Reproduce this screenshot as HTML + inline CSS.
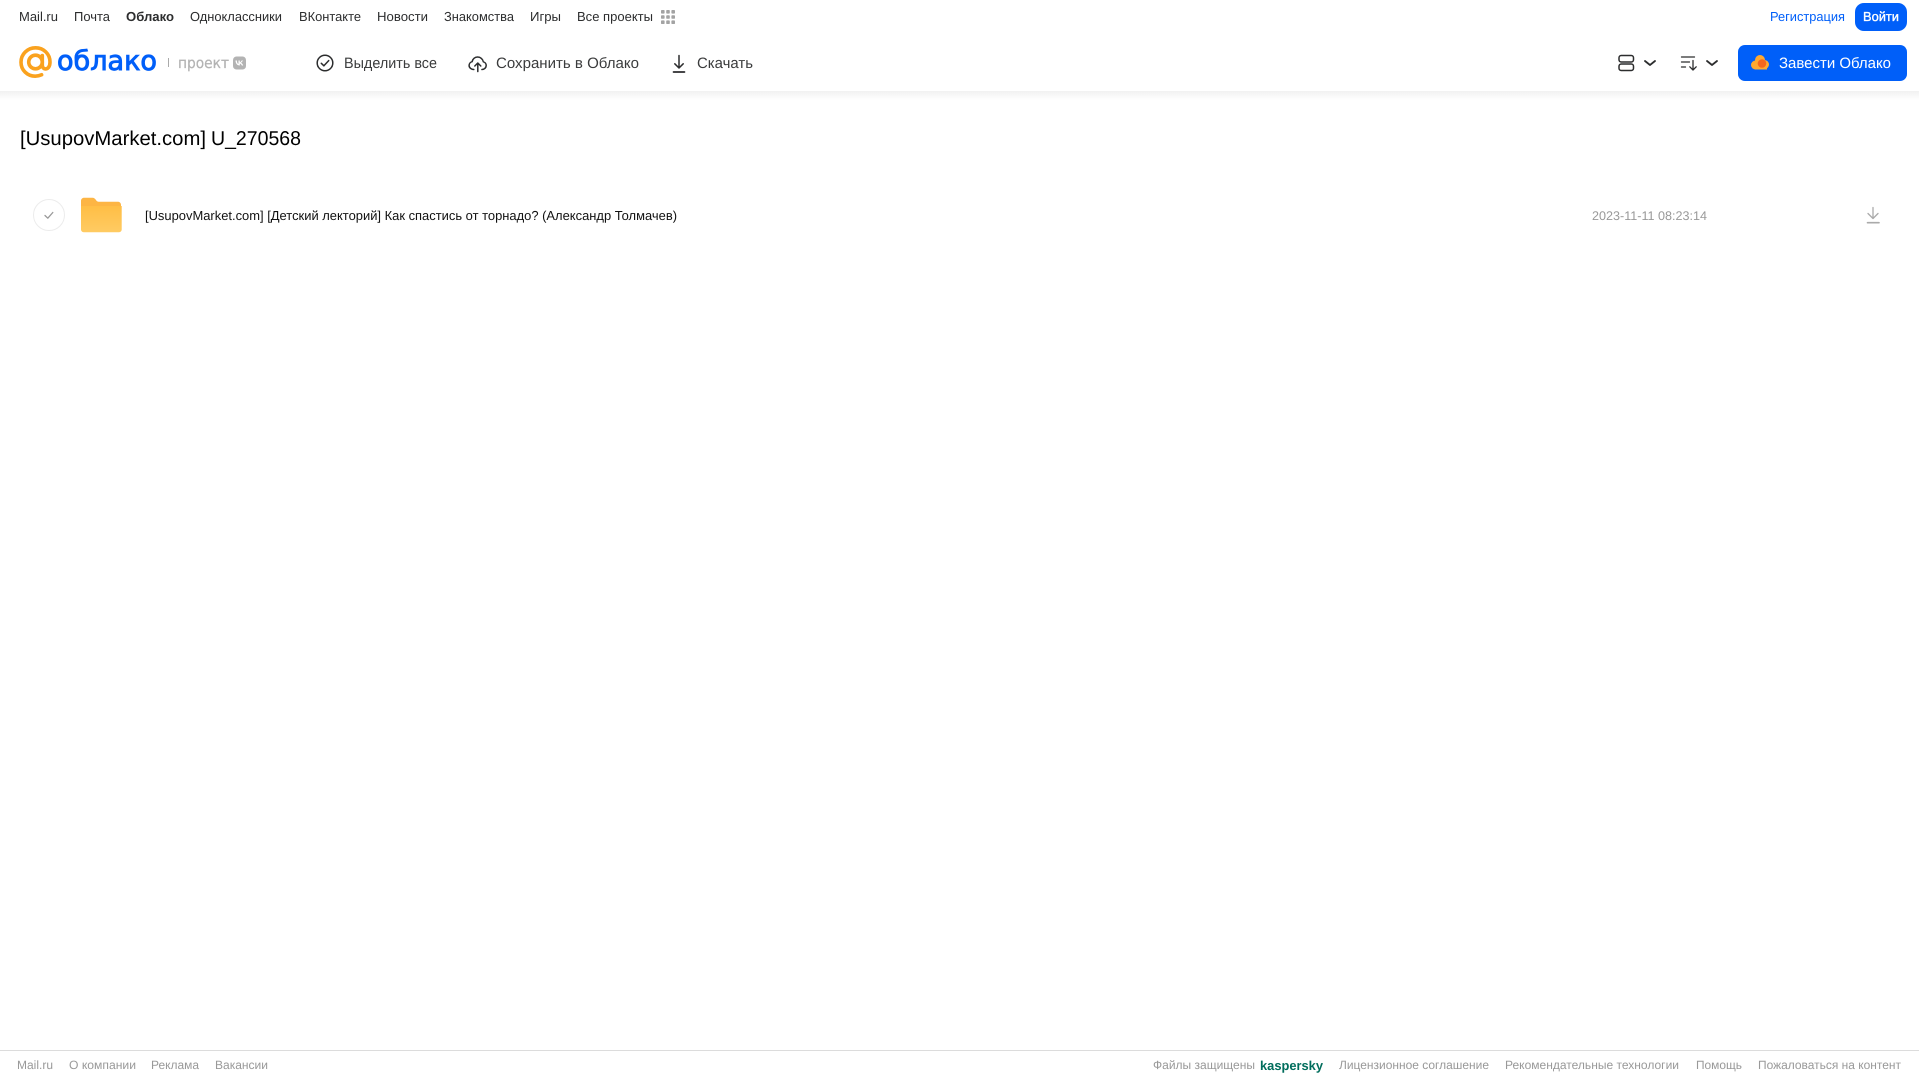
<!DOCTYPE html>
<html lang="ru"><head><meta charset="utf-8"><title>Облако</title>
<style>
html,body{margin:0;padding:0;background:#fff;width:1919px;height:1079px;overflow:hidden}
svg{position:absolute;left:0;top:0;display:block}
text{font-family:"Liberation Sans","DejaVu Sans",sans-serif;text-rendering:geometricPrecision}
.n{font-size:13px;fill:#2c2d2e}
.t{font-size:15px;fill:#3b3c3d}
.f{font-size:12px;fill:#999}
</style></head><body>
<svg width="1919" height="1079" viewBox="0 0 1919 1079" xmlns="http://www.w3.org/2000/svg">
<defs>
<linearGradient id="hs" x1="0" y1="0" x2="0" y2="1"><stop offset="0" stop-color="#f1f1f1"/><stop offset="1" stop-color="#fff"/></linearGradient>
<linearGradient id="fo" x1="0" y1="0" x2="0" y2="1"><stop offset="0" stop-color="#ffbe45"/><stop offset="1" stop-color="#ffcb63"/></linearGradient>
</defs>
<rect x="0" y="91" width="1919" height="9" fill="url(#hs)"/>

<!-- top nav -->
<text class="n" x="19" y="21" textLength="39" lengthAdjust="spacingAndGlyphs">Mail.ru</text>
<text class="n" x="74" y="21" textLength="36" lengthAdjust="spacingAndGlyphs">Почта</text>
<text class="n" x="126" y="21" textLength="48" lengthAdjust="spacingAndGlyphs" font-weight="700">Облако</text>
<text class="n" x="190" y="21" textLength="92" lengthAdjust="spacingAndGlyphs">Одноклассники</text>
<text class="n" x="299" y="21" textLength="62" lengthAdjust="spacingAndGlyphs">ВКонтакте</text>
<text class="n" x="377" y="21" textLength="51" lengthAdjust="spacingAndGlyphs">Новости</text>
<text class="n" x="444" y="21" textLength="70" lengthAdjust="spacingAndGlyphs">Знакомства</text>
<text class="n" x="530" y="21" textLength="31" lengthAdjust="spacingAndGlyphs">Игры</text>
<text class="n" x="577" y="21" textLength="76" lengthAdjust="spacingAndGlyphs">Все проекты</text>
<g fill="#a3a3a3">
<rect x="661" y="10" width="3.6" height="3.6" rx=".8"/><rect x="666.2" y="10" width="3.6" height="3.6" rx=".8"/><rect x="671.4" y="10" width="3.6" height="3.6" rx=".8"/>
<rect x="661" y="15.2" width="3.6" height="3.6" rx=".8"/><rect x="666.2" y="15.2" width="3.6" height="3.6" rx=".8"/><rect x="671.4" y="15.2" width="3.6" height="3.6" rx=".8"/>
<rect x="661" y="20.4" width="3.6" height="3.6" rx=".8"/><rect x="666.2" y="20.4" width="3.6" height="3.6" rx=".8"/><rect x="671.4" y="20.4" width="3.6" height="3.6" rx=".8"/>
</g>
<text x="1770" y="21" font-size="13" fill="#005ff9" textLength="75" lengthAdjust="spacingAndGlyphs">Регистрация</text>
<rect x="1855" y="3" width="52" height="28" rx="9" fill="#005ff9"/>
<text x="1863" y="21" font-size="13" fill="#fff" stroke="#fff" stroke-width=".35" textLength="36" lengthAdjust="spacingAndGlyphs">Войти</text>

<!-- logo -->
<g fill="none" stroke="#faa21e" stroke-width="3.6" stroke-linecap="round">
<circle cx="35.500" cy="62" r="6.800"/>
<path d="M42.300 55.500V65c0 2.500 1.500 3.900 3.400 3.900 2.500 0 4.300-2.700 4.300-6.900 0-8.100-6.400-14.200-14.400-14.200S21 54 21 62.200c0 8 6.400 14 14.200 14 2.400 0 4.500-.5 6.400-1.400"/>
</g>
<text x="57" y="70" font-size="27" fill="#005ff9" stroke="#005ff9" stroke-width=".9" style="font-family:'DejaVu Sans',sans-serif" textLength="100" lengthAdjust="spacingAndGlyphs">облако</text>
<rect x="168" y="58" width="1" height="9" fill="#aaa"/>
<text x="178" y="68" font-size="15" fill="#b3b3b3" stroke="#b3b3b3" stroke-width=".25" style="font-family:'DejaVu Sans',sans-serif" textLength="51" lengthAdjust="spacingAndGlyphs">проект</text>
<rect x="233" y="56.500" width="13" height="13" rx="3.500" fill="#b3b3b3"/>
<path d="M235.500 60.500c.1 3 1.700 5 4.300 5v-2c.9.2 1.700 1 2 2h1.400c-.3-1.300-1.200-2.300-2.200-2.800.9-.6 1.600-1.400 1.900-2.200h-1.300c-.4 1-1.100 1.700-1.800 1.900v-1.900h-1.300v3.400c-.8-.2-1.600-1.100-1.600-3.400z" fill="#fff"/>

<!-- toolbar -->
<g fill="none" stroke="#2c2d2e" stroke-width="1.500" stroke-linecap="round" stroke-linejoin="round">
<circle cx="325" cy="63" r="7.800"/>
<path d="M321.300 63.300l2.600 2.500 4.800-5.200"/>
<path d="M473.800 69.500c-2.700 0-4.700-1.800-4.700-4 0-1.900 1.300-3.400 3-3.800.5-2.700 2.800-4.700 5.500-4.700 2.900 0 5.300 2.100 5.700 4.800 1.600.4 2.900 1.900 2.900 3.700 0 2.200-1.800 4-4.300 4"/>
<path d="M477.800 71.500v-8.500M474.800 66l3-3 3 3"/>
<path d="M679 55.500v12M674.800 63.800l4.200 4.200 4.200-4.200"/>
</g>
<path d="M673.500 72h11" stroke="#2c2d2e" stroke-width="1.700" stroke-linecap="round" fill="none"/>
<text class="t" x="344" y="68" textLength="93" lengthAdjust="spacingAndGlyphs">Выделить все</text>
<text class="t" x="496" y="68" textLength="143" lengthAdjust="spacingAndGlyphs">Сохранить в Облако</text>
<text class="t" x="697" y="68" textLength="56" lengthAdjust="spacingAndGlyphs">Скачать</text>

<!-- right toolbar -->
<g fill="none" stroke="#2c2d2e" stroke-width="1.500" stroke-linecap="round" stroke-linejoin="round">
<rect x="1619" y="55.500" width="14.500" height="6.500" rx="2.200"/>
<rect x="1619" y="64" width="14.500" height="6.500" rx="2.200"/>
<path d="M1645 61l5 4 5-4" stroke-width="1.800"/>
<path d="M1707 61l5 4 5-4" stroke-width="1.800"/>
<path d="M1681.500 57h13M1681.500 62h8M1681.500 67h4" stroke-width="1.300"/>
<path d="M1693 60.500v9M1689.800 66.800l3.200 3.200 3.200-3.200" stroke-width="1.300"/>
</g>
<rect x="1738" y="45" width="169" height="36" rx="7" fill="#005ff9"/>
<circle cx="1755.500" cy="65" r="4.500" fill="#ffa930"/>
<circle cx="1760" cy="60" r="5" fill="#ffa930"/>
<rect x="1755" y="62" width="12" height="7.500" fill="#ffa930"/>
<circle cx="1764.500" cy="64.500" r="4.500" fill="#ffa930"/>
<circle cx="1762" cy="63.500" r="4.300" fill="#f4671f"/>
<text x="1779" y="68" font-size="15" fill="#fff" textLength="112" lengthAdjust="spacingAndGlyphs">Завести Облако</text>

<!-- title -->
<text x="20" y="145" font-size="20" fill="#000" textLength="186" lengthAdjust="spacingAndGlyphs">[UsupovMarket.com]</text>
<text x="211" y="145" font-size="20" fill="#000" textLength="90" lengthAdjust="spacingAndGlyphs">U_270568</text>

<!-- row -->
<circle cx="49" cy="215" r="15.500" fill="#fff" stroke="#ececec" stroke-width="1"/>
<path d="M45 215.500l2.800 2.700 5-5.700" fill="none" stroke="#999" stroke-width="1.300" stroke-linecap="round" stroke-linejoin="round"/>
<path d="M81 201c0-1.900 1.300-3.200 3.200-3.200h8.300c1.600 0 2.500.9 3.300 2 .7 1 1.300 1.900 2.700 1.900h19.300c1.900 0 3.200 1.300 3.200 3.200v6H81z" fill="#fdb544"/>
<path d="M81 206h40.700v23.500c0 1.500-1.200 2.700-2.700 2.700H83.700c-1.500 0-2.700-1.200-2.700-2.700z" fill="url(#fo)"/>
<text x="145" y="220" font-size="13" fill="#111" textLength="532" lengthAdjust="spacingAndGlyphs">[UsupovMarket.com] [Детский лекторий] Как спастись от торнадо? (Александр Толмачев)</text>
<text x="1592" y="220" font-size="12.500" fill="#999" textLength="115" lengthAdjust="spacingAndGlyphs">2023-11-11 08:23:14</text>
<g fill="none" stroke="#aaa" stroke-linecap="round" stroke-linejoin="round" stroke-width="1.300">
<path d="M1873 207.500v11M1868 213.500l5 5 5-5"/>
<path d="M1867.500 222.700h11.500" stroke-width="1.600"/>
</g>

<!-- footer -->
<rect x="0" y="1050" width="1919" height="1" fill="#dcdcdc"/>
<text class="f" x="17" y="1069" textLength="36" lengthAdjust="spacingAndGlyphs">Mail.ru</text>
<text class="f" x="69" y="1069" textLength="67" lengthAdjust="spacingAndGlyphs">О компании</text>
<text class="f" x="151" y="1069" textLength="48" lengthAdjust="spacingAndGlyphs">Реклама</text>
<text class="f" x="215" y="1069" textLength="53" lengthAdjust="spacingAndGlyphs">Вакансии</text>
<text class="f" x="1153" y="1069" textLength="102" lengthAdjust="spacingAndGlyphs">Файлы защищены</text>
<text x="1260" y="1070" font-size="13" font-weight="700" fill="#006d5c" textLength="63" lengthAdjust="spacingAndGlyphs">kaspersky</text>
<text class="f" x="1339" y="1069" textLength="150" lengthAdjust="spacingAndGlyphs">Лицензионное соглашение</text>
<text class="f" x="1505" y="1069" textLength="174" lengthAdjust="spacingAndGlyphs">Рекомендательные технологии</text>
<text class="f" x="1696" y="1069" textLength="46" lengthAdjust="spacingAndGlyphs">Помощь</text>
<text class="f" x="1758" y="1069" textLength="143" lengthAdjust="spacingAndGlyphs">Пожаловаться на контент</text>
</svg>
</body></html>
